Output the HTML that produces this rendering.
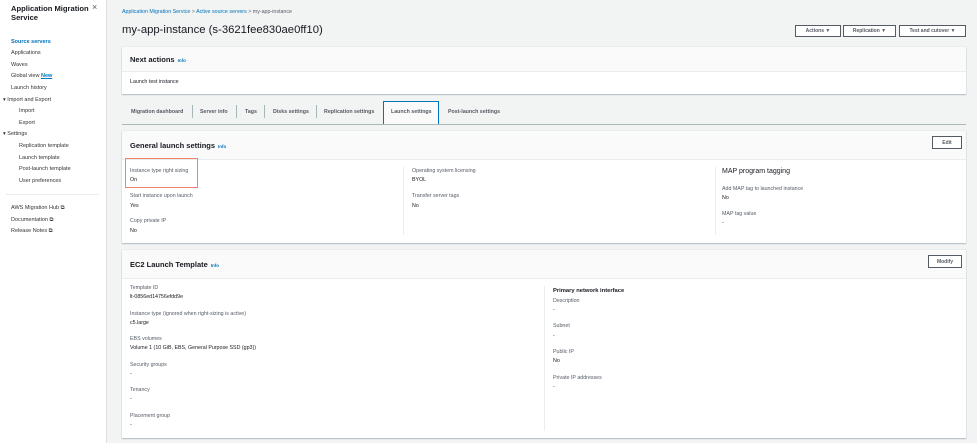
<!DOCTYPE html><html><head><style>
*{margin:0;padding:0;box-sizing:border-box}
body{width:977px;height:443px;overflow:hidden;background:#f2f3f3;font-family:"Liberation Sans",sans-serif;color:#16191f;position:relative;font-size:5.5px}
.a{position:absolute;white-space:nowrap}
#side{position:absolute;left:0;top:0;width:107px;height:443px;background:#fff;border-right:1px solid #e0e0e0}
.nav{position:absolute;font-size:5.5px;color:#333}
.blue{color:#0073bb}
.panel{position:absolute;background:#fff;box-shadow:0 1px 1px rgba(0,31,63,.25),0 0 0 1px #eaeded}
.ph{position:absolute;left:0;right:0;top:0;background:#fafafa;border-bottom:1px solid #eaeded}
.h{font-weight:bold;font-size:7.5px}
.info{color:#0073bb;font-size:4.5px;font-weight:bold;margin-left:3px}
.btn{position:absolute;border:1px solid #545b64;background:#fff;font-size:5px;font-weight:bold;color:#545b64;display:flex;align-items:center;justify-content:center;height:12px}
.lab{color:#545b64;font-size:5.3px}
.val{font-size:5.3px}
.vd{position:absolute;width:1px;background:#eaeded}
.tab{position:absolute;top:109px;font-size:5.3px;font-weight:bold;color:#545b64}
.ts{position:absolute;top:105px;width:1px;height:13px;background:#aab7b8}
</style></head><body>
<div id="side">
<div class="a" style="left:11px;top:4px;font-size:7.6px;font-weight:bold;line-height:9px">Application Migration<br>Service</div>
<div class="a" style="left:92px;top:2px;font-size:9px;color:#545b64">×</div>
<div class="nav blue a" style="left:11px;top:39px;font-weight:bold">Source servers</div>
<div class="nav a" style="left:11px;top:50px">Applications</div>
<div class="nav a" style="left:11px;top:62px">Waves</div>
<div class="nav a" style="left:11px;top:73px">Global view <span class="blue" style="font-weight:bold;text-decoration:underline">New</span></div>
<div class="nav a" style="left:11px;top:85px">Launch history</div>
<div class="nav a" style="left:3px;top:97px">▾ Import and Export</div>
<div class="nav a" style="left:19px;top:108px">Import</div>
<div class="nav a" style="left:19px;top:120px">Export</div>
<div class="nav a" style="left:3px;top:131px">▾ Settings</div>
<div class="nav a" style="left:19px;top:143px">Replication template</div>
<div class="nav a" style="left:19px;top:155px">Launch template</div>
<div class="nav a" style="left:19px;top:166px">Post-launch template</div>
<div class="nav a" style="left:19px;top:178px">User preferences</div>
<div class="a" style="left:6px;top:194px;width:93px;height:1px;background:#eaeded"></div>
<div class="nav a" style="left:11px;top:205px">AWS Migration Hub ⧉</div>
<div class="nav a" style="left:11px;top:217px">Documentation ⧉</div>
<div class="nav a" style="left:11px;top:228px">Release Notes ⧉</div>
</div>

<div class="a" style="left:122px;top:9px;font-size:5.3px"><span class="blue">Application Migration Service</span> <span style="color:#687078">&gt;</span> <span class="blue">Active source servers</span> <span style="color:#687078">&gt;</span> <span style="color:#545b64">my-app-instance</span></div>
<div class="a" style="left:122px;top:24px;font-size:11.3px">my-app-instance (s-3621fee830ae0ff10)</div>
<div class="btn" style="left:795px;top:25px;width:46px">Actions ▼</div>
<div class="btn" style="left:843px;top:25px;width:53px">Replication ▼</div>
<div class="btn" style="left:899px;top:25px;width:67px">Test and cutover ▼</div>

<div class="panel" style="left:122px;top:47px;width:844px;height:47px">
<div class="ph" style="height:25px"></div>
<div class="a h" style="left:8px;top:8px">Next actions<span class="info">Info</span></div>
<div class="a val" style="left:8px;top:32px">Launch test instance</div>
</div>

<div class="tab" style="left:131px">Migration dashboard</div><div class="ts" style="left:192px"></div>
<div class="tab" style="left:200px">Server info</div><div class="ts" style="left:236px"></div>
<div class="tab" style="left:245px">Tags</div><div class="ts" style="left:264px"></div>
<div class="tab" style="left:273px">Disks settings</div><div class="ts" style="left:316px"></div>
<div class="tab" style="left:324px">Replication settings</div>
<div class="a" style="left:383px;top:101px;width:56px;height:24px;border:1px solid #0073bb;background:#fafafa"></div>
<div class="tab blue" style="left:391px">Launch settings</div>
<div class="tab" style="left:448px">Post-launch settings</div>
<div class="a" style="left:122px;top:124px;width:844px;height:1px;background:#aab7b8"></div>

<div class="panel" style="left:122px;top:131px;width:844px;height:112px">
<div class="ph" style="height:29px"></div>
<div class="a h" style="left:8px;top:10px">General launch settings<span class="info">Info</span></div>
<div class="btn" style="left:810px;top:5px;width:30px;height:13px">Edit</div>
<div class="a" style="left:3px;top:27px;width:73px;height:30px;border:1px solid #f0846a"></div>
<div class="a lab" style="left:8px;top:37px">Instance type right sizing</div>
<div class="a val" style="left:8px;top:46px">On</div>
<div class="a lab" style="left:8px;top:62px">Start instance upon launch</div>
<div class="a val" style="left:8px;top:72px">Yes</div>
<div class="a lab" style="left:8px;top:87px">Copy private IP</div>
<div class="a val" style="left:8px;top:97px">No</div>
<div class="vd" style="left:281px;top:36px;height:68px"></div>
<div class="a lab" style="left:290px;top:37px">Operating system licensing</div>
<div class="a val" style="left:290px;top:46px">BYOL</div>
<div class="a lab" style="left:290px;top:62px">Transfer server tags</div>
<div class="a val" style="left:290px;top:72px">No</div>
<div class="vd" style="left:593px;top:36px;height:68px"></div>
<div class="a" style="left:600px;top:37px;font-size:7px">MAP program tagging</div>
<div class="a lab" style="left:600px;top:55px">Add MAP tag to launched instance</div>
<div class="a val" style="left:600px;top:64px">No</div>
<div class="a lab" style="left:600px;top:80px">MAP tag value</div>
<div class="a val" style="left:600px;top:89px">-</div>
</div>

<div class="panel" style="left:122px;top:250px;width:844px;height:188px">
<div class="ph" style="height:29px"></div>
<div class="a h" style="left:8px;top:10px">EC2 Launch Template<span class="info">Info</span></div>
<div class="btn" style="left:806px;top:5px;width:34px;height:13px">Modify</div>
<div class="a lab" style="left:8px;top:35px">Template ID</div>
<div class="a val" style="left:8px;top:44px">lt-0856ed14756efdd9e</div>
<div class="a lab" style="left:8px;top:61px">Instance type (ignored when right-sizing is active)</div>
<div class="a val" style="left:8px;top:70px">c5.large</div>
<div class="a lab" style="left:8px;top:86px">EBS volumes</div>
<div class="a val" style="left:8px;top:95px">Volume 1 (10 GiB, EBS, General Purpose SSD (gp3))</div>
<div class="a lab" style="left:8px;top:112px">Security groups</div>
<div class="a val" style="left:8px;top:121px">-</div>
<div class="a lab" style="left:8px;top:137px">Tenancy</div>
<div class="a val" style="left:8px;top:146px">-</div>
<div class="a lab" style="left:8px;top:163px">Placement group</div>
<div class="a val" style="left:8px;top:172px">-</div>
<div class="vd" style="left:422px;top:36px;height:145px"></div>
<div class="a" style="left:431px;top:38px;font-size:5.8px;font-weight:bold">Primary network interface</div>
<div class="a lab" style="left:431px;top:48px">Description</div>
<div class="a val" style="left:431px;top:57px">-</div>
<div class="a lab" style="left:431px;top:73px">Subnet</div>
<div class="a val" style="left:431px;top:83px">-</div>
<div class="a lab" style="left:431px;top:99px">Public IP</div>
<div class="a val" style="left:431px;top:108px">No</div>
<div class="a lab" style="left:431px;top:125px">Private IP addresses</div>
<div class="a val" style="left:431px;top:134px">-</div>
</div>
</body></html>
